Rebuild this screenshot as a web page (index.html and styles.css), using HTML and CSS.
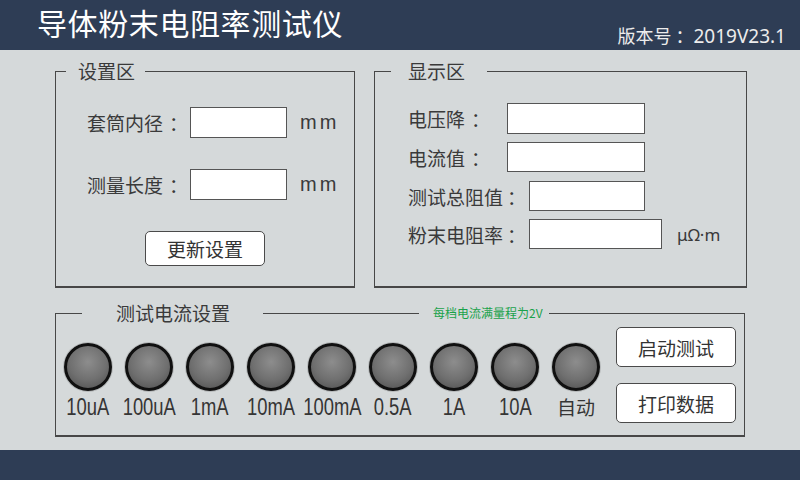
FILE: index.html
```html
<!DOCTYPE html>
<html lang="zh-CN">
<head>
<meta charset="utf-8">
<title>导体粉末电阻率测试仪</title>
<link rel="stylesheet" href="styles.css">
</head>
<body>
<div class="screen">
  <header class="topbar">
    <h1 class="title">导体粉末电阻率测试仪</h1>
    <div class="version"><span class="ver-label">版本号<span class="colon">：</span></span>2019V23.1</div>
  </header>
  <main class="main">
    <div class="top-row">
      <section class="group settings">
        <div class="legend">设置区</div>
        <div class="field-row s1"><span class="label">套筒内径<span class="colon">：</span></span><span class="input"></span><span class="unit">mm</span></div>
        <div class="field-row s2"><span class="label">测量长度<span class="colon">：</span></span><span class="input"></span><span class="unit">mm</span></div>
        <div class="btn update">更新设置</div>
      </section>
      <section class="group display">
        <div class="legend">显示区</div>
        <div class="field-row d1"><span class="label short">电压降<span class="colon">：</span></span><span class="input wide"></span></div>
        <div class="field-row d2"><span class="label short">电流值<span class="colon">：</span></span><span class="input wide"></span></div>
        <div class="field-row d3"><span class="label long">测试总阻值<span class="colon">：</span></span><span class="input mid"></span></div>
        <div class="field-row d4"><span class="label long">粉末电阻率<span class="colon">：</span></span><span class="input big"></span><span class="unit ohm">μΩ·m</span></div>
      </section>
    </div>
    <section class="group current">
      <div class="head">
        <span class="legend">测试电流设置</span>
        <span class="note">每档电流满量程为2V</span>
      </div>
      <div class="current-body">
        <div class="lights">
          <div class="light"><span class="lamp"></span><span class="lamp-label">10uA</span></div>
          <div class="light"><span class="lamp"></span><span class="lamp-label">100uA</span></div>
          <div class="light"><span class="lamp"></span><span class="lamp-label">1mA</span></div>
          <div class="light"><span class="lamp"></span><span class="lamp-label">10mA</span></div>
          <div class="light"><span class="lamp"></span><span class="lamp-label">100mA</span></div>
          <div class="light"><span class="lamp"></span><span class="lamp-label">0.5A</span></div>
          <div class="light"><span class="lamp"></span><span class="lamp-label">1A</span></div>
          <div class="light"><span class="lamp"></span><span class="lamp-label">10A</span></div>
          <div class="light"><span class="lamp"></span><span class="lamp-label cjk">自动</span></div>
        </div>
        <div class="actions">
          <div class="btn action">启动测试</div>
          <div class="btn action">打印数据</div>
        </div>
      </div>
    </section>
  </main>
  <footer class="bottombar"></footer>
</div>
</body>
</html>
```

FILE: styles.css
```css
* { box-sizing: border-box; }
html, body { margin: 0; padding: 0; }
body {
  width: 800px;
  height: 480px;
  overflow: hidden;
  background: #d5d9da;
  font-family: "Noto Sans", "Noto Sans CJK SC", sans-serif;
  color: #353535;
}
.screen {
  width: 800px;
  height: 480px;
  display: flex;
  flex-direction: column;
}
.topbar {
  height: 50px;
  background: #2e3d55;
  display: flex;
  justify-content: space-between;
  align-items: flex-start;
  color: #fff;
}
.title {
  margin: 0;
  padding-left: 37px;
  font-family: "Noto Sans CJK SC", sans-serif;
  font-weight: 400;
  font-size: 30px;
  letter-spacing: 0.6px;
  line-height: 44px;
  color: #fff;
}
.version {
  align-self: flex-end;
  margin-right: 14px;
  font-family: "Noto Sans", "Noto Sans CJK SC", sans-serif;
  font-size: 19px;
  line-height: 24px;
  padding-bottom: 2px;
  color: #ececec;
  white-space: nowrap;
}
.ver-label { font-family: "Noto Sans CJK SC", sans-serif; font-size: 18px; }
.colon { display: inline-block; padding-left: 6px; }
.version .colon { padding-left: 4px; }
.main {
  height: 400px;
  padding: 21px 0 0 55px;
}
.bottombar {
  height: 30px;
  background: #2e3d55;
}
.top-row {
  display: flex;
  gap: 19px;
}
.group {
  border: 1px solid #474747;
  border-bottom-width: 2px;
}
.settings { width: 300px; height: 217px; }
.display { width: 373px; height: 217px; }
.legend {
  display: block;
  width: fit-content;
  background: #d5d9da;
  font-family: "Noto Sans CJK SC", sans-serif;
  font-size: 19px;
  line-height: 24px;
  color: #3a3a3a;
}
.settings .legend { margin: -13px 0 0 10px; padding: 0 10px 0 12px; }
.display .legend { margin: -13px 0 0 16px; padding: 0 22px 0 17px; }

.field-row {
  display: flex;
  align-items: center;
  font-family: "Noto Sans CJK SC", sans-serif;
  font-size: 19px;
}
.label { color: #3a3a3a; white-space: nowrap; }
.input {
  display: block;
  background: #fff;
  border: 1px solid #555;
}
.settings .field-row { padding-left: 31px; height: 31px; }
.settings .label { width: 103px; }
.settings .input { width: 97px; height: 31px; }
.unit { margin-left: 13px; font-family: "Liberation Sans", "Noto Sans", sans-serif; font-size: 20px; letter-spacing: 3px; color: #3a3a3a; }
.s1 { margin-top: 24px; }
.s2 { margin-top: 31px; }
.btn {
  display: flex;
  align-items: center;
  justify-content: center;
  background: #fff;
  border: 1px solid #4a4a4a;
  border-radius: 5px;
  font-family: "Noto Sans CJK SC", sans-serif;
  font-size: 19px;
  color: #333;
}
.update { width: 120px; height: 35px; margin: 31px auto 0; }

.display .field-row { padding-left: 33px; }
.label.short { width: 99px; }
.label.long { width: 121px; }
.display .label.long .colon { padding-left: 4px; }
.input.wide { width: 138px; }
.input.mid { width: 116px; }
.input.big { width: 133px; }
.d1 { margin-top: 20px; height: 31px; }
.d1 .input { height: 31px; }
.d2 { margin-top: 8px; height: 30px; }
.d3 { margin-top: 9px; height: 30px; }
.d4 { margin-top: 8px; height: 30px; }
.d2 .input, .d3 .input, .d4 .input { height: 30px; }
.unit.ohm { margin-left: 15px; font-family: "Noto Sans", sans-serif; font-size: 17px; letter-spacing: 0; }

.current {
  width: 690px;
  height: 124px;
  margin-top: 25px;
}
.head {
  display: flex;
  align-items: center;
  height: 24px;
  margin-top: -13px;
}
.current .legend { margin-left: 26px; padding: 0 33px 0 34px; }
.note {
  margin-left: 156px;
  padding: 0 6px 0 14px;
  background: #d5d9da;
  font-family: "Noto Sans CJK SC", sans-serif;
  font-size: 12px;
  line-height: 24px;
  color: #19a24a;
}
.current-body {
  display: flex;
  align-items: flex-start;
}
.lights {
  display: flex;
  margin-top: 18px;
  padding-left: 1.5px;
}
.light {
  width: 61px;
  display: flex;
  flex-direction: column;
  align-items: center;
}
.lamp {
  display: block;
  width: 48px;
  height: 48px;
  border-radius: 50%;
  border: 3px solid #101010;
  background: radial-gradient(circle at 50% 38%, #8d8d8d 0%, #6f6f6f 55%, #4b4b4b 100%);
  box-shadow: 0 0 0 1px rgba(0,0,0,0.15);
}
.lamp-label {
  display: inline-block;
  margin-top: 4px;
  font-family: "Liberation Sans", sans-serif;
  font-size: 23px;
  line-height: 24px;
  color: #353535;
  white-space: nowrap;
  transform: scaleX(0.8);
}
.lamp-label.cjk {
  font-family: "Noto Sans CJK SC", sans-serif;
  font-size: 19px;
  transform: none;
}
.actions {
  margin: 2px 8px 0 auto;
  display: flex;
  flex-direction: column;
  gap: 16px;
}
.action { width: 120px; height: 40px; }
```
